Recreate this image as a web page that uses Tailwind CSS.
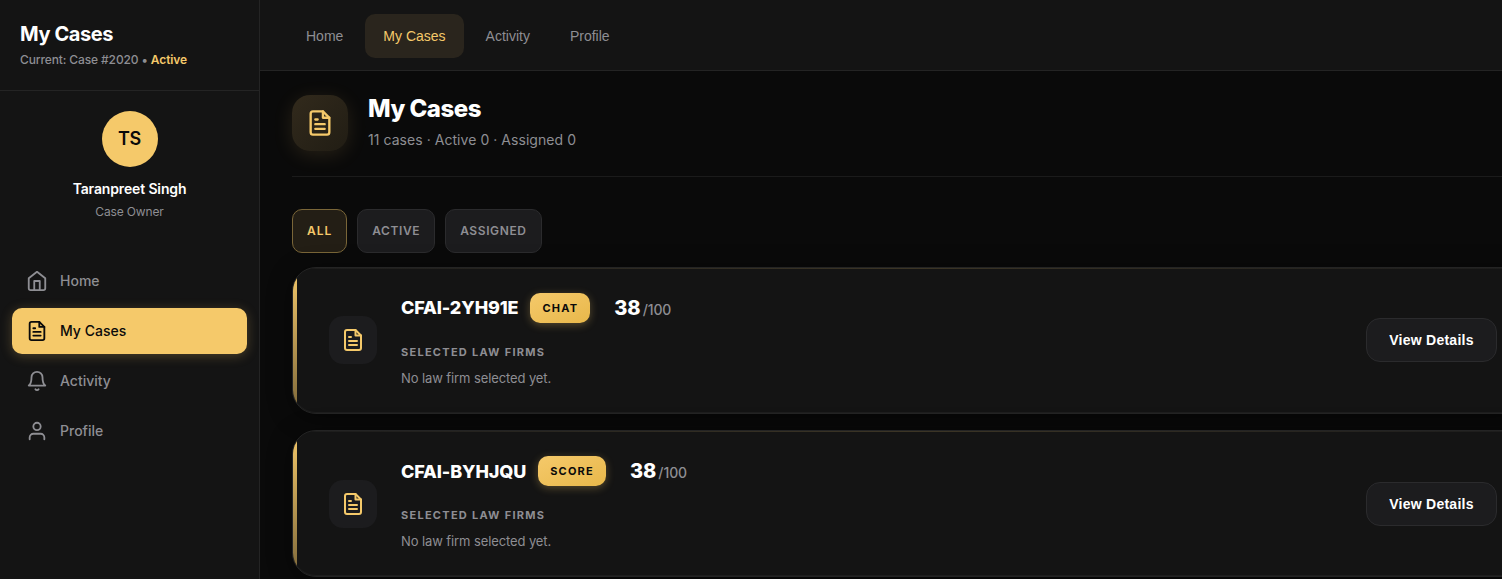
<!DOCTYPE html>
<html lang="en">
  <head>
    <meta charset="UTF-8" />
    <meta name="viewport" content="width=device-width, initial-scale=1.0" />
    <title>My Cases</title>
    <script src="https://cdn.jsdelivr.net/npm/@tailwindcss/browser@4"></script>
  </head>
  <body class="bg-[#0a0a0a] font-['Inter',sans-serif] text-white overflow-hidden">
    <!-- shared icon -->
    <svg class="hidden">
      <symbol id="file" viewBox="0 0 24 24" fill="none" stroke="currentColor" stroke-width="2" stroke-linecap="round" stroke-linejoin="round">
        <path d="M14.5 2H6a2 2 0 0 0-2 2v16a2 2 0 0 0 2 2h12a2 2 0 0 0 2-2V7.5z" />
        <path d="M14.5 2v5.5H20M16 13H8M16 17H8M10 9H8" />
      </symbol>
    </svg>

    <div class="flex h-screen overflow-hidden">
      <aside class="w-[260px] shrink-0 bg-[#141414] border-r border-[#242424]">
        <div class="h-[91px] px-5 pt-5 border-b border-[#242424]">
          <h2 class="text-xl leading-7 font-bold tracking-[-0.4px]">My Cases</h2>
          <p class="mt-1 text-xs leading-4 font-medium tracking-[-0.12px] text-[#8e8e93]">
            Current: Case #2020 • <span class="font-semibold text-[#f5c96a]">Active</span>
          </p>
        </div>
        <div class="flex flex-col items-center pt-5">
          <div class="size-14 rounded-full bg-[#f5c96a] text-[#0a0a0a] text-lg font-semibold tracking-[-0.3px] flex items-center justify-center">TS</div>
          <div class="mt-3 text-sm leading-5 font-semibold tracking-[-0.14px]">Taranpreet Singh</div>
          <div class="mt-1 text-xs leading-[18px] tracking-[-0.14px] text-[#8e8e93]">Case Owner</div>
        </div>
        <nav class="mt-[37px] px-3 flex flex-col gap-1 text-sm font-medium text-[#8e8e93]">
          <a href="#" class="h-[46px] px-3.5 flex items-center gap-3 rounded-[10px]">
            <svg class="size-[22px]" viewBox="0 0 24 24" fill="none" stroke="currentColor" stroke-width="2" stroke-linecap="round" stroke-linejoin="round">
              <path d="m3 9 9-7 9 7v11a2 2 0 0 1-2 2H5a2 2 0 0 1-2-2z" />
              <path d="M9 22V12h6v10" />
            </svg>
            Home
          </a>
          <a href="#" class="h-[46px] px-3.5 flex items-center gap-3 rounded-[10px] bg-[#f5c96a] text-[#0a0a0a] shadow-[0_2px_12px_rgba(245,201,106,0.25)]">
            <svg class="size-[22px]"><use href="#file" /></svg>
            My Cases
          </a>
          <a href="#" class="h-[46px] px-3.5 flex items-center gap-3 rounded-[10px]">
            <svg class="size-[22px]" viewBox="0 0 24 24" fill="none" stroke="currentColor" stroke-width="2" stroke-linecap="round" stroke-linejoin="round">
              <path d="M18 8A6 6 0 0 0 6 8c0 7-3 9-3 9h18s-3-2-3-9" />
              <path d="M13.73 21a2 2 0 0 1-3.46 0" />
            </svg>
            Activity
          </a>
          <a href="#" class="h-[46px] px-3.5 flex items-center gap-3 rounded-[10px]">
            <svg class="size-[22px]" viewBox="0 0 24 24" fill="none" stroke="currentColor" stroke-width="2" stroke-linecap="round" stroke-linejoin="round">
              <path d="M20 21v-2a4 4 0 0 0-4-4H8a4 4 0 0 0-4 4v2" />
              <circle cx="12" cy="7" r="4" />
            </svg>
            Profile
          </a>
        </nav>
      </aside>

      <main class="flex-1 min-w-0 overflow-hidden">
        <header class="h-[71px] pl-7 pt-0.5 flex items-center gap-1 bg-[#141414] border-b border-[#242424] font-['Liberation_Sans',Arial,sans-serif] text-sm text-[#8e8e93]">
          <a href="#" class="h-11 px-[18px] flex items-center rounded-[10px]">Home</a>
          <a href="#" class="h-11 px-[18px] flex items-center rounded-[10px] bg-[#2a251d] text-[#f5c96a]">My Cases</a>
          <a href="#" class="h-11 px-[18px] flex items-center rounded-[10px]">Activity</a>
          <a href="#" class="h-11 px-[18px] flex items-center rounded-[10px]">Profile</a>
        </header>

        <div class="w-[1270px] pl-8 pt-6">
          <div class="h-[82px] flex items-start gap-5 border-b border-[#1b1b1b]">
            <div class="size-14 rounded-[18px] bg-linear-to-br from-[#322a1c] to-[#211d14] text-[#f5c96a] flex items-center justify-center shadow-[0_4px_20px_rgba(245,201,106,0.12)]">
              <svg class="size-7"><use href="#file" /></svg>
            </div>
            <div>
              <h1 class="text-2xl leading-7 font-extrabold tracking-[-0.5px]">My Cases</h1>
              <p class="mt-1.5 text-sm leading-[22px] tracking-[0.05px] text-[#8e8e93]">11 cases · Active 0 · Assigned 0</p>
            </div>
          </div>

          <div class="mt-8 flex gap-2.5 text-xs font-semibold tracking-[0.6px] text-[#8e8e93]">
            <button class="h-11 px-3.5 rounded-[10px] border border-[#7a6638] bg-[#231e15] tracking-[0.96px] text-[#f5c96a]">ALL</button>
            <button class="h-11 px-3.5 rounded-[10px] border border-[#2b2b2d] bg-[#1c1c1e]">ACTIVE</button>
            <button class="h-11 px-3.5 rounded-[10px] border border-[#2b2b2d] bg-[#1c1c1e]">ASSIGNED</button>
          </div>

          <div class="mt-[13.8px] flex flex-col gap-4">
            <article class="relative h-[147.3px] pl-9 pr-8 flex items-center overflow-hidden rounded-3xl border border-[#242424] bg-[#141414] shadow-[0_4px_24px_rgba(0,0,0,0.4),inset_0_-1px_0_#1e1e1e]">
              <div class="absolute left-0 inset-y-0 w-1 bg-linear-to-b from-[#f5c96a] to-[#7f693a]"></div>
              <div class="absolute top-0 inset-x-0 h-px bg-linear-to-r from-[#1c1c1c] via-[#3c3525] to-[#1c1c1c]"></div>
              <div class="size-12 rounded-[14px] bg-[#1c1c1e] text-[#f5c96a] flex items-center justify-center">
                <svg class="size-6"><use href="#file" /></svg>
              </div>
              <div class="ml-6 flex-1">
                <div class="h-[30.4px] flex items-center">
                  <h3 class="pt-px text-lg font-extrabold tracking-[-0.12px]">CFAI-2YH91E</h3>
                  <span class="ml-3 h-[30.4px] px-3 flex items-center rounded-[10px] bg-linear-to-br from-[#f5c96a] to-[#e8b84a] text-[11px] font-bold tracking-[1.2px] text-[#0a0a0a] shadow-[0_2px_8px_rgba(245,201,106,0.3)]">CHAT</span>
                  <div class="ml-6 flex items-baseline gap-0.5">
                    <span class="text-xl font-extrabold">38</span>
                    <span class="text-sm font-medium tracking-[-0.1px] text-[#8e8e93]">/100</span>
                  </div>
                </div>
                <div class="mt-5 text-[11px] leading-[18px] font-bold tracking-[1.27px] text-[#8e8e93]">SELECTED LAW FIRMS</div>
                <div class="mt-[7px] text-[13px] leading-5 tracking-[-0.1px] text-[#8e8e93]">No law firm selected yet.</div>
              </div>
              <button class="h-11 w-[131px] rounded-[14px] border border-[#2b2b2d] bg-[#1c1c1e] font-['Liberation_Sans',Arial,sans-serif] text-sm font-bold tracking-[0.25px]">View Details</button>
            </article>

            <article class="relative h-[147.3px] pl-9 pr-8 flex items-center overflow-hidden rounded-3xl border border-[#242424] bg-[#141414] shadow-[0_4px_24px_rgba(0,0,0,0.4),inset_0_-1px_0_#1e1e1e]">
              <div class="absolute left-0 inset-y-0 w-1 bg-linear-to-b from-[#f5c96a] to-[#7f693a]"></div>
              <div class="absolute top-0 inset-x-0 h-px bg-linear-to-r from-[#1c1c1c] via-[#3c3525] to-[#1c1c1c]"></div>
              <div class="size-12 rounded-[14px] bg-[#1c1c1e] text-[#f5c96a] flex items-center justify-center">
                <svg class="size-6"><use href="#file" /></svg>
              </div>
              <div class="ml-6 flex-1">
                <div class="h-[30.4px] flex items-center">
                  <h3 class="pt-0.5 text-lg font-extrabold tracking-[-0.12px]">CFAI-BYHJQU</h3>
                  <span class="ml-3 h-[30.4px] px-3 flex items-center rounded-[10px] bg-linear-to-br from-[#f5c96a] to-[#e8b84a] text-[11px] font-bold tracking-[1.2px] text-[#0a0a0a] shadow-[0_2px_8px_rgba(245,201,106,0.3)]">SCORE</span>
                  <div class="ml-6 flex items-baseline gap-0.5">
                    <span class="text-xl font-extrabold">38</span>
                    <span class="text-sm font-medium tracking-[-0.1px] text-[#8e8e93]">/100</span>
                  </div>
                </div>
                <div class="mt-5 text-[11px] leading-[18px] font-bold tracking-[1.27px] text-[#8e8e93]">SELECTED LAW FIRMS</div>
                <div class="mt-[7px] text-[13px] leading-5 tracking-[-0.1px] text-[#8e8e93]">No law firm selected yet.</div>
              </div>
              <button class="h-11 w-[131px] rounded-[14px] border border-[#2b2b2d] bg-[#1c1c1e] font-['Liberation_Sans',Arial,sans-serif] text-sm font-bold tracking-[0.25px]">View Details</button>
            </article>
          </div>
        </div>
      </main>
    </div>
  </body>
</html>
